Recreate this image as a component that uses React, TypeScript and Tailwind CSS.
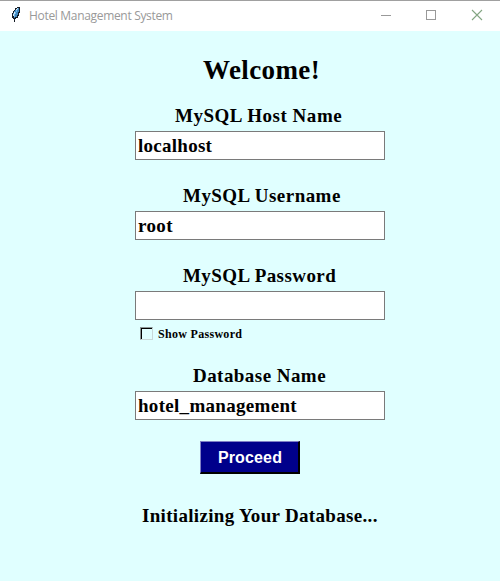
import React from "react";

const serif = "font-['Liberation_Serif','Times_New_Roman',serif] font-bold text-black whitespace-pre";

function Feather() {
  return (
    <svg width="10" height="18" viewBox="0 0 10 18" shapeRendering="crispEdges">
      <path d="M6 1h3v6h-1v3h-1v2h-2v1h-1v3h-1v-3h-1v-1h-1v-5h1v-2h1v-1h1v-2h2z" fill="#141a24" />
      <path d="M6 2h2v4h-1v3h-1v2h-2v1h-1v-2h-1v-3h1v-2h1v-1h1v-1h1z" fill="#3f86bd" />
      <path d="M6 2h1v2h-1v2h-1v2h-1v3h-1v-3h1v-2h1v-2h1z" fill="#6eb6ea" />
      <path d="M6 2h1v1h-1zM5 3h1v1h-1zM3 6h1v2h-1zM2 8h1v2h-1z" fill="#d5e6f2" />
    </svg>
  );
}

function TitleBar() {
  return (
    <header className="flex h-[31px] w-full items-start border-t border-[#a0a0a0] bg-white">
      <div className="ml-[11px] mt-[5px]"><Feather /></div>
      <span className="ml-[8px] mt-[6px] whitespace-pre font-['Open_Sans',sans-serif] text-[12px] leading-[18px] tracking-[-0.32px] text-[#999999]">
        Hotel Management System
      </span>
      <div className="ml-auto mr-[17px] mt-[8px] flex gap-[35px]">
        <svg width="10" height="12" shapeRendering="crispEdges"><path d="M0 6h10v1H0z" fill="#999" /></svg>
        <svg width="10" height="12" shapeRendering="crispEdges"><path d="M.5 1.5h9v9h-9z" fill="none" stroke="#999" /></svg>
        <svg width="12" height="12"><path d="M1 1l10 10M11 1L1 11" stroke="#84a683" strokeWidth="1.1" /></svg>
      </div>
    </header>
  );
}

function Field({ label, labelClass, value, valueClass }: { label: string; labelClass: string; value: string; valueClass: string }) {
  return (
    <div className="flex w-[250px] flex-col">
      <label className={`${serif} h-[30px] text-[19px] leading-[30px] ${labelClass}`}>{label}</label>
      <div className={`${serif} h-[29px] border border-[#7a7a7a] bg-white pl-[2px] text-[19px] leading-[27px] ${valueClass}`}>{value}</div>
    </div>
  );
}

export default function App() {
  return (
    <div className="flex h-[581px] w-[500px] flex-col overflow-hidden bg-[#e0ffff]">
      <TitleBar />
      <main className="flex flex-col pl-[135px]">
        <h1 className={`${serif} ml-[68px] mt-[19px] h-[41px] text-[27px] leading-[40px] tracking-[0.4px]`}>Welcome!</h1>
        <div className="mt-[10px] flex flex-col">
          <Field label="MySQL Host Name" labelClass="pl-[40px] tracking-[0.52px]" value="localhost" valueClass="tracking-[0.27px]" />
        </div>
        <div className="mt-[21px]">
          <Field label="MySQL Username" labelClass="pl-[48px] tracking-[0.45px]" value="root" valueClass="tracking-[0.35px]" />
        </div>
        <div className="mt-[21px]">
          <Field label="MySQL Password" labelClass="pl-[48px] tracking-[0.42px]" value="" valueClass="" />
        </div>
        <div className="ml-[5px] mt-[4px] flex h-[20px] items-start">
          <span className="mt-[3px] size-[13px] border border-b-[#c8d8d8] border-l-[#8a9696] border-r-[#c8d8d8] border-t-[#8a9696] bg-[#e0ffff]">
            <span className="block size-[11px] border-l border-t border-black" />
          </span>
          <span className={`${serif} ml-[5px] text-[12px] leading-[20px] tracking-[0.3px]`}>Show Password</span>
        </div>
        <div className="mt-[17px]">
          <Field label="Database Name" labelClass="pl-[58px] tracking-[0.45px]" value="hotel_management" valueClass="tracking-[0.3px]" />
        </div>
        <button className="ml-[65px] mt-[21px] h-[33px] w-[100px] border border-b-2 border-r-2 border-b-black border-l-[#8080c5] border-r-black border-t-[#8080c5] bg-[#00008b] pb-0 pl-[1px] pt-px font-['Liberation_Sans',Arial,sans-serif] text-[16px] font-bold leading-[30px] tracking-[0.15px] text-white">
          Proceed
        </button>
        <p className={`${serif} ml-[7px] mt-[27px] h-[30px] text-[19px] leading-[30px] tracking-[0.32px]`}>Initializing Your Database...</p>
      </main>
    </div>
  );
}
